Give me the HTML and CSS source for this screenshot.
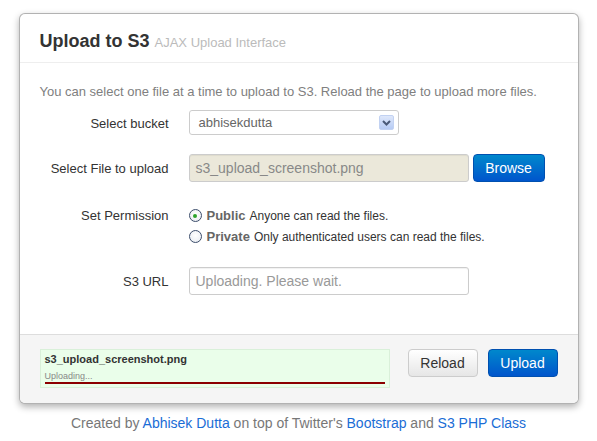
FILE: index.html
```html
<!DOCTYPE html>
<html>
<head>
<meta charset="utf-8">
<link rel="stylesheet" href="styles.css">
</head>
<body>
<div class="page">
  <div class="modal">
    <div class="modal-header">
      <h3>Upload to S3 <small>AJAX Upload Interface</small></h3>
    </div>
    <div class="modal-body">
      <p class="intro">You can select one file at a time to upload to S3. Reload the page to upload more files.</p>
      <div class="form">
        <div class="row row-bucket">
          <label class="lbl">Select bucket</label>
          <div class="ctl">
            <div class="select">
              <span class="select-text">abhisekdutta</span>
              <span class="select-arrow">
                <svg width="9" height="6" viewBox="0 0 9 6"><path d="M1 1 L4.5 4.5 L8 1" fill="none" stroke="#4a5a78" stroke-width="2"/></svg>
              </span>
            </div>
          </div>
        </div>
        <div class="row row-file">
          <label class="lbl">Select File to upload</label>
          <div class="ctl ctl-inline">
            <div class="input input-file">s3_upload_screenshot.png</div>
            <span class="btn btn-primary btn-browse">Browse</span>
          </div>
        </div>
        <div class="row row-perm">
          <label class="lbl">Set Permission</label>
          <div class="ctl radios">
            <div class="radio"><span class="radio-dot checked"></span><strong>Public</strong> <span class="desc">Anyone can read the files.</span></div>
            <div class="radio"><span class="radio-dot"></span><strong>Private</strong> <span class="desc">Only authenticated users can read the files.</span></div>
          </div>
        </div>
        <div class="row row-url">
          <label class="lbl">S3 URL</label>
          <div class="ctl">
            <div class="input input-url">Uploading. Please wait.</div>
          </div>
        </div>
      </div>
    </div>
    <div class="modal-footer">
      <div class="progress-box">
        <div class="pb-name">s3_upload_screenshot.png</div>
        <div class="pb-status">Uploading...</div>
        <div class="pb-bar"></div>
      </div>
      <div class="actions">
        <span class="btn btn-default">Reload</span>
        <span class="btn btn-primary">Upload</span>
      </div>
    </div>
  </div>
  <p class="credits">Created by <a href="#">Abhisek Dutta</a> on top of Twitter's <a href="#">Bootstrap</a> and <a href="#">S3 PHP Class</a></p>
</div>
</body>
</html>
```

FILE: styles.css
```css
html, body {
  margin: 0;
  padding: 0;
  background: #fff;
}
body {
  font-family: "Liberation Sans", Arial, sans-serif;
  font-size: 13px;
  color: #333;
}
.page {
  padding-top: 13px;
  display: flex;
  flex-direction: column;
  align-items: center;
}
.modal {
  width: 560px;
  box-sizing: border-box;
  background: #fff;
  border: 1px solid rgba(0,0,0,0.3);
  border-radius: 6px;
  box-shadow: 0 3px 7px rgba(0,0,0,0.3);
  overflow: hidden;
}
.modal-header {
  padding: 18px 20px 10px;
  border-bottom: 1px solid #eee;
}
.modal-header h3 {
  margin: 0;
  font-size: 18px;
  line-height: 18px;
  font-weight: bold;
  color: #333;
}
.modal-header small {
  font-size: 13px;
  font-weight: normal;
  color: #bbb;
}
.modal-body {
  padding: 20px 20px 39px;
}
.intro {
  margin: 0;
  line-height: 18px;
  color: #808080;
}
.form {
  display: flex;
  flex-direction: column;
}
.row {
  display: grid;
  grid-template-columns: 129px 1fr;
  column-gap: 20px;
}
.lbl {
  text-align: right;
  color: #333;
  line-height: 18px;
}
.row-bucket { margin-top: 9px; }
.row-bucket .lbl { padding-top: 5px; }
.row-file { margin-top: 19px; }
.row-file .lbl { padding-top: 6px; }
.row-perm { margin-top: 20px; }
.row-perm .lbl { padding-top: 5px; }
.row-url { margin-top: 22px; }
.row-url .lbl { padding-top: 6px; }

.select {
  width: 210px;
  height: 25px;
  box-sizing: border-box;
  border: 1px solid #ccc;
  border-radius: 3px;
  background: #fff;
  display: flex;
  align-items: center;
  justify-content: space-between;
  padding: 0 4px 0 9px;
  color: #666;
}
.select-arrow {
  width: 15px;
  height: 15px;
  border-radius: 2px;
  background: linear-gradient(#dfe8fb, #b6cbf4);
  border: 1px solid #c2d2f2;
  box-sizing: border-box;
  display: flex;
  align-items: center;
  justify-content: center;
}
.ctl-inline {
  display: flex;
  gap: 4px;
  align-items: center;
}
.input {
  width: 280px;
  height: 28px;
  box-sizing: border-box;
  border: 1px solid #ccc;
  border-radius: 3px;
  padding: 0 6px;
  display: flex;
  align-items: center;
  font-size: 14px;
  color: #999;
  box-shadow: inset 0 1px 1px rgba(0,0,0,0.06);
}
.input-file {
  background: #ebe8da;
  color: #888;
}
.input-url {
  background: #fff;
  color: #999;
}
.btn {
  display: inline-flex;
  align-items: center;
  justify-content: center;
  height: 28px;
  box-sizing: border-box;
  border-radius: 4px;
  font-size: 14px;
  width: 70px;
}
.btn-primary {
  color: #fff;
  background: linear-gradient(#0088cc, #0055cc);
  border: 1px solid #0050b0;
}
.btn-browse {
  width: 72px;
}
.btn-default {
  color: #333;
  background: linear-gradient(#ffffff, #e6e6e6);
  border: 1px solid #ccc;
}
.radios {
  display: flex;
  flex-direction: column;
  gap: 4px;
  padding-top: 5px;
}
.radio {
  display: flex;
  align-items: center;
  height: 17px;
  white-space: nowrap;
}
.radio strong {
  color: #666;
  font-size: 13px;
  margin-left: 5px;
  margin-right: 4px;
}
.radio .desc {
  font-size: 12px;
  color: #333;
}
.radio-dot {
  width: 13px;
  height: 13px;
  box-sizing: border-box;
  border-radius: 50%;
  border: 1px solid #3c4d6b;
  background: radial-gradient(circle at 50% 40%, #fff, #e6eaf0);
  display: inline-flex;
  align-items: center;
  justify-content: center;
}
.radio-dot.checked::after {
  content: "";
  width: 4px;
  height: 4px;
  border-radius: 50%;
  background: #2ca42c;
}
.modal-footer {
  background: #f5f5f5;
  border-top: 1px solid #ddd;
  padding: 14px 20px 15px;
  display: flex;
  justify-content: space-between;
  align-items: flex-start;
}
.progress-box {
  width: 350px;
  height: 39px;
  box-sizing: border-box;
  background: #eafeea;
  border: 1px solid #d9f0d9;
  padding: 3px 4px 0;
}
.pb-name {
  font-size: 11px;
  font-weight: bold;
  color: #333;
  line-height: 13px;
}
.pb-status {
  font-size: 9px;
  color: #888;
  line-height: 12px;
  margin-top: 4px;
}
.pb-bar {
  height: 2px;
  background: #8b0000;
}
.actions {
  display: flex;
  gap: 10px;
}
.credits {
  margin: 11px 0 0;
  font-size: 14px;
  color: #777;
}
.credits a {
  color: #1a6dd6;
  text-decoration: none;
}
```
